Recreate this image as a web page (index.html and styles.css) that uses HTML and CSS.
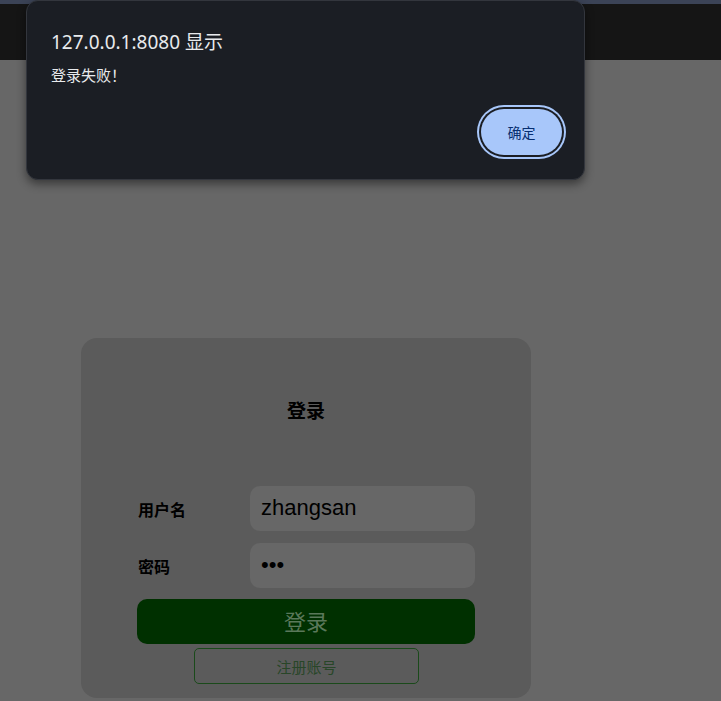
FILE: index.html
```html
<!DOCTYPE html>
<html lang="zh-CN">
<head>
<meta charset="utf-8">
<title>登录</title>
<link rel="stylesheet" href="styles.css">
</head>
<body>
<header class="topbar"></header>
<main class="page">
  <section class="card">
    <h2 class="card-title">登录</h2>
    <form class="form">
      <div class="row">
        <label class="label">用户名</label>
        <input class="field" type="text" value="zhangsan">
      </div>
      <div class="row">
        <label class="label">密码</label>
        <input class="field" type="password" value="123">
      </div>
      <button type="button" class="btn-login">登录</button>
      <button type="button" class="btn-register">注册账号</button>
    </form>
  </section>
</main>
<div class="dialog">
  <div class="dialog-title">127.0.0.1:8080 显示</div>
  <div class="dialog-msg">登录失败！</div>
  <div class="dialog-actions">
    <button type="button" class="dialog-btn">确定</button>
  </div>
</div>
</body>
</html>
```
FILE: styles.css
```css
html, body {
  margin: 0;
  padding: 0;
}
body {
  background: #676767;
  font-family: "Noto Sans CJK SC", "Noto Sans", sans-serif;
  min-height: 701px;
  overflow: hidden;
}
.topbar {
  height: 56px;
  border-top: 4px solid #3b4356;
  background: #151515;
}
.page {
  padding: 278px 0 0 81px;
}
.card {
  width: 450px;
  height: 360px;
  box-sizing: border-box;
  background: #5b5b5b;
  border-radius: 16px;
  padding: 59px 56px 0 56px;
}
.card-title {
  margin: 0;
  text-align: center;
  font-size: 19px;
  line-height: 26px;
  font-weight: 700;
  color: #000;
}
.form {
  margin-top: 63px;
  display: flex;
  flex-direction: column;
}
.row {
  display: flex;
  align-items: center;
  height: 45px;
  margin-left: 1px;
}
.row + .row {
  margin-top: 12px;
}
.label {
  width: 112px;
  font-size: 16px;
  font-weight: 700;
  color: #000;
  padding-top: 1px;
}
.field {
  width: 225px;
  height: 45px;
  box-sizing: border-box;
  border: none;
  outline: none;
  border-radius: 10px;
  background: #676767;
  padding: 0 11px 2px;
  font-family: "Liberation Sans", Arial, sans-serif;
  font-size: 22px;
  color: #000;
}
.btn-login {
  margin-top: 11px;
  width: 338px;
  height: 45px;
  margin-left: 0;
  border: none;
  border-radius: 10px;
  background: #003000;
  color: #5a785a;
  font-family: "Noto Sans CJK SC", sans-serif;
  font-size: 22px;
  padding: 0 0 3px;
}
.btn-register {
  margin: 4px auto 0 57px;
  width: 225px;
  height: 36px;
  border: 1px solid #1a4a1a;
  border-radius: 5px;
  background: transparent;
  color: #284628;
  font-family: "Noto Sans CJK SC", sans-serif;
  font-size: 15px;
  padding: 0;
}
.dialog {
  position: absolute;
  left: 26px;
  top: 0;
  width: 559px;
  height: 180px;
  box-sizing: border-box;
  background: #1b1e24;
  border: 1px solid #33363d;
  border-radius: 12px;
  box-shadow: 0 4px 10px rgba(0, 0, 0, 0.45);
  padding: 28px 22px 0 24px;
  color: #e8eaed;
}
.dialog-title {
  font-family: "Noto Sans", "Noto Sans CJK SC", sans-serif;
  font-size: 19px;
  line-height: 26px;
}
.dialog-msg {
  margin-top: 10px;
  font-family: "Noto Sans CJK SC", sans-serif;
  font-size: 15px;
  line-height: 20px;
}
.dialog-actions {
  display: flex;
  justify-content: flex-end;
  margin-top: 24px;
}
.dialog-btn {
  width: 81px;
  height: 46px;
  border: none;
  border-radius: 23px;
  background: #a8c7fa;
  color: #062e6f;
  font-family: "Noto Sans CJK SC", sans-serif;
  font-size: 14px;
  box-shadow: 0 0 0 2px #1b1e24, 0 0 0 4px #a8c7fa;
}
```
